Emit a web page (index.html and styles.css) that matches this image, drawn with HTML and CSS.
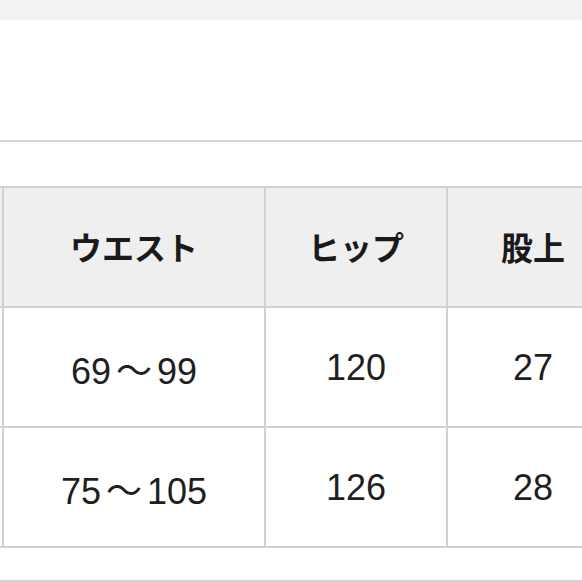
FILE: index.html
```html
<!DOCTYPE html>
<html lang="ja">
<head>
<meta charset="utf-8">
<link rel="stylesheet" href="styles.css">
</head>
<body>
<div class="topband"></div>
<div class="spacer"></div>
<div class="rule"></div>
<div class="tablewrap">
  <table class="size">
    <colgroup>
      <col class="cut">
      <col class="c1">
      <col class="c2">
      <col class="c3">
    </colgroup>
    <tr class="head">
      <th></th>
      <th>ウエスト</th>
      <th>ヒップ</th>
      <th>股上</th>
    </tr>
    <tr>
      <td></td>
      <td>69<span class="tilde">～</span>99</td>
      <td>120</td>
      <td>27</td>
    </tr>
    <tr>
      <td></td>
      <td>75<span class="tilde">～</span>105</td>
      <td>126</td>
      <td>28</td>
    </tr>
  </table>
</div>
<div class="bottomrule"></div>
</body>
</html>
```
FILE: styles.css
```css
html, body {
  margin: 0;
  padding: 0;
  background: #ffffff;
}
body {
  width: 582px;
  height: 582px;
  overflow: hidden;
  font-family: "Liberation Sans", "Noto Sans CJK JP", sans-serif;
  color: #1a1a1a;
}
.topband {
  height: 20px;
  background: #f2f2f2;
}
.spacer {
  height: 120px;
}
.rule {
  height: 2px;
  background: #d3d3d3;
}
.tablewrap {
  margin-top: 44px;
  overflow: hidden;
  width: 582px;
}
.size {
  border-collapse: collapse;
  margin-left: -98px;
  table-layout: fixed;
  width: 716px;
}
.size th, .size td {
  border: 2px solid #d2d2d2;
  text-align: center;
  vertical-align: middle;
  padding: 0;
}
.size tr {
  height: 120px;
}
.size .head th {
  background: #efefef;
  font-family: "Noto Sans CJK JP", sans-serif;
  font-weight: 700;
  font-size: 32px;
  color: #1a1a1a;
  padding-bottom: 2px;
}
.size td {
  font-size: 36px;
  color: #1f1f1f;
  padding-top: 1px;
}
.tilde {
  padding: 0 5px;
}
.cut { width: 100px; }
.c1 { width: 262px; }
.c2 { width: 182px; }
.c3 { width: 172px; }
.bottomrule {
  margin-top: 32px;
  height: 2px;
  background: #d3d3d3;
}
```
